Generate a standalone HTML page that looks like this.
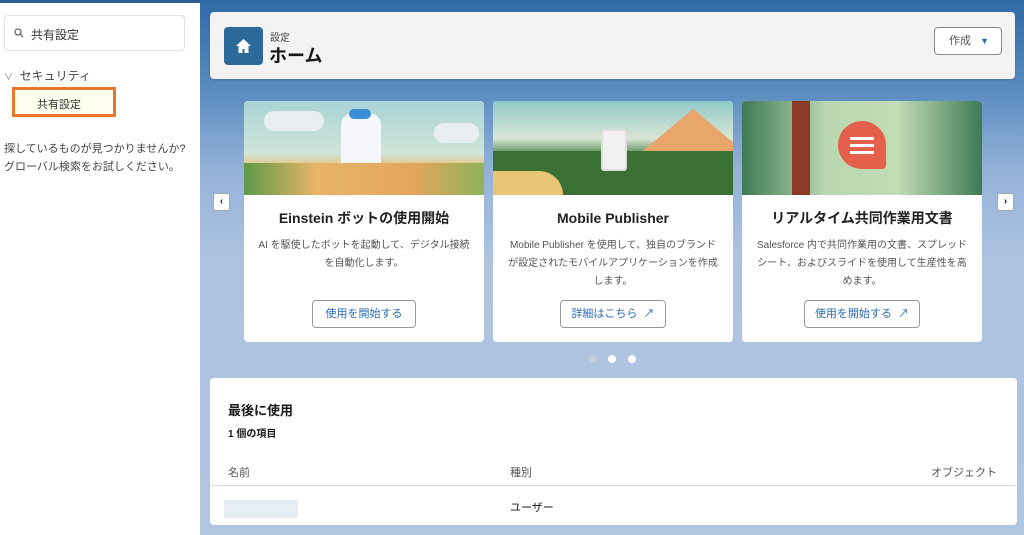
<!DOCTYPE html>
<html><head><meta charset="utf-8"><style>
*{box-sizing:border-box;margin:0;padding:0}
body{width:1024px;height:535px;overflow:hidden;font-family:"Liberation Sans","Noto Sans CJK JP",sans-serif;background:#fff;position:relative;color:#181818}
.side{position:absolute;left:0;top:0;width:200px;height:535px;background:#fff;border-top:3px solid #2b5f93}
.search{position:absolute;left:4px;top:12px;width:181px;height:36px;border:1px solid #e2e2e2;border-radius:4px;font-size:12px;padding:10px 0 0 26px;color:#333}
.main{position:absolute;left:200px;top:0;width:824px;height:535px;background:linear-gradient(180deg,#2f6aa6 0px,#5a8cc0 90px,#94b2d8 170px,#adc3e0 260px,#b0c5e0 535px)}
.hdr{position:absolute;left:10px;top:12px;width:805px;height:67px;background:#f3f3f3;border-radius:4px;box-shadow:0 1px 2px rgba(0,0,0,.2)}
.card{position:absolute;top:101px;width:240px;height:241px;background:#fff;border-radius:4px;overflow:hidden;text-align:center}
.img{height:94px;position:relative;overflow:hidden}
.ct{position:absolute;left:0;width:100%;top:107px;font-size:14px;font-weight:bold;line-height:20px;color:#222}
.cd{position:absolute;left:10px;right:10px;top:136px;font-size:10px;color:#555;line-height:18px}
.btn{position:absolute;top:199px;height:28px;border:1px solid #999;border-radius:4px;font-size:11px;color:#2a6bb0;line-height:26px;background:#fff}
.arr{position:absolute;top:193px;width:17px;height:18px;background:#fff;border:1px solid #aaa;border-radius:3px;font-size:10px;text-align:center;line-height:16px;font-weight:bold}
.recent{position:absolute;left:10px;top:378px;width:807px;height:147px;background:#fff;border-radius:4px}
</style></head><body>
<div class="side">
 <div class="search"><svg style="position:absolute;left:9px;top:12px" width="10" height="10" viewBox="0 0 10 10"><circle cx="4" cy="4" r="3" fill="none" stroke="#666" stroke-width="1.3"/><path d="M6.3 6.3L9 9" stroke="#666" stroke-width="1.3"/></svg>共有設定</div>
 <div style="position:absolute;left:4px;top:64px;font-size:12px;color:#444"><span style="font-size:9px;color:#777">∨</span>&nbsp; セキュリティ</div>
 <div style="position:absolute;left:12px;top:84px;width:104px;height:30px;border:3px solid #e8782a;background:#fffff0;font-size:11px;padding:6px 0 0 22px;color:#333">共有設定</div>
 <div style="position:absolute;left:4px;top:137px;font-size:11px;line-height:18px;color:#444">探しているものが見つかりませんか?<br>グローバル検索をお試しください。</div>
</div>
<div class="main">
 <div class="hdr">
  <div style="position:absolute;left:14px;top:15px;width:39px;height:38px;background:#2c6a9c;border-radius:4px"><svg style="position:absolute;left:11px;top:11px" width="17" height="16" viewBox="0 0 17 16"><path d="M8.5 1L1 8h2.5v7h4v-4h2v4h4V8H16z" fill="#fff"/></svg></div>
  <div style="position:absolute;left:60px;top:17px;font-size:10px;color:#444">設定</div>
  <div style="position:absolute;left:59px;top:30px;font-size:18px;font-weight:bold">ホーム</div>
  <div style="position:absolute;left:724px;top:15px;width:68px;height:28px;border:1px solid #888;border-radius:4px;background:#fff;font-size:11px;color:#555;line-height:26px;padding-left:14px">作成 <span style="color:#2a6bb0;font-size:9px;margin-left:6px">▼</span></div>
 </div>
 <div class="arr" style="left:13px">‹</div>
 <div class="arr" style="left:797px">›</div>
 <div class="card" style="left:44px">
  <div class="img" style="background:linear-gradient(#a9d3d6,#cfe5d8 55%,#e6c480 70%,#92b860)">
   <div style="position:absolute;left:20px;top:10px;width:60px;height:20px;background:#e8eef0;border-radius:10px"></div>
   <div style="position:absolute;left:190px;top:22px;width:45px;height:20px;background:#e8eef0;border-radius:10px"></div>
   <div style="position:absolute;left:97px;top:12px;width:40px;height:64px;background:#f4f6fa;border-radius:12px"></div>
   <div style="position:absolute;left:105px;top:8px;width:22px;height:10px;background:#3b8fd8;border-radius:6px"></div>
   <div style="position:absolute;left:0;top:62px;width:100%;height:32px;background:linear-gradient(90deg,#5e9a48,#e7b468 30%,#e5a55d 70%,#8fb35a)"></div>
  </div>
  <div class="ct">Einstein ボットの使用開始</div>
  <div class="cd">AI を駆使したボットを起動して、デジタル接続<br>を自動化します。</div>
  <div class="btn" style="left:68px;width:104px">使用を開始する</div>
 </div>
 <div class="card" style="left:293px">
  <div class="img" style="background:linear-gradient(#8fc9c8,#d9e6d6 40%,#3f7a3a 60%,#2f6630)">
   <div style="position:absolute;left:140px;top:8px;width:0;height:0;border-left:60px solid transparent;border-right:60px solid transparent;border-bottom:50px solid #e8a66a"></div>
   <div style="position:absolute;left:0;top:50px;width:100%;height:44px;background:#3b7035"></div>
   <div style="position:absolute;left:0;top:70px;width:70px;height:24px;background:#e8c477;border-radius:0 40px 0 0"></div>
   <div style="position:absolute;left:108px;top:28px;width:26px;height:42px;background:#f1f1f1;border:2px solid #ddd;border-radius:3px"></div>
  </div>
  <div class="ct">Mobile Publisher</div>
  <div class="cd">Mobile Publisher を使用して、独自のブランド<br>が設定されたモバイルアプリケーションを作成<br>します。</div>
  <div class="btn" style="left:67px;width:106px">詳細はこちら&nbsp; ↗</div>
 </div>
 <div class="card" style="left:542px">
  <div class="img" style="background:linear-gradient(90deg,#3f7a55,#b9d7b0 35%,#c2dcb5 65%,#3d7a55)">
   <div style="position:absolute;left:50px;top:0;width:18px;height:94px;background:#8b3a25"></div>
   <div style="position:absolute;left:96px;top:20px;width:48px;height:48px;background:#e4604a;border-radius:50% 50% 4px 50%"></div>
   <div style="position:absolute;left:108px;top:36px;width:24px;height:3px;background:#fff;box-shadow:0 7px 0 #fff,0 14px 0 #fff"></div>
  </div>
  <div class="ct">リアルタイム共同作業用文書</div>
  <div class="cd">Salesforce 内で共同作業用の文書、スプレッド<br>シート、およびスライドを使用して生産性を高<br>めます。</div>
  <div class="btn" style="left:62px;width:116px">使用を開始する&nbsp; ↗</div>
 </div>
 <div style="position:absolute;left:389px;top:355px;width:8px;height:8px;border-radius:50%;background:#c3d0e2"></div>
 <div style="position:absolute;left:408px;top:355px;width:8px;height:8px;border-radius:50%;background:#fff"></div>
 <div style="position:absolute;left:428px;top:355px;width:8px;height:8px;border-radius:50%;background:#fff"></div>
 <div class="recent">
  <div style="position:absolute;left:18px;top:22px;font-size:13px;font-weight:bold">最後に使用</div>
  <div style="position:absolute;left:18px;top:47px;font-size:10px;font-weight:bold">1 個の項目</div>
  <div style="position:absolute;left:18px;top:86px;font-size:11px;color:#555">名前</div>
  <div style="position:absolute;left:300px;top:86px;font-size:11px;color:#555">種別</div>
  <div style="position:absolute;right:20px;top:86px;font-size:11px;color:#555">オブジェクト</div>
  <div style="position:absolute;left:0;top:107px;width:100%;height:1px;background:#ddd"></div>
  <div style="position:absolute;left:14px;top:122px;width:74px;height:18px;background:#e6eef3"></div>
  <div style="position:absolute;left:300px;top:121px;font-size:11px">ユーザー</div>
 </div>
</div>
</body></html>
